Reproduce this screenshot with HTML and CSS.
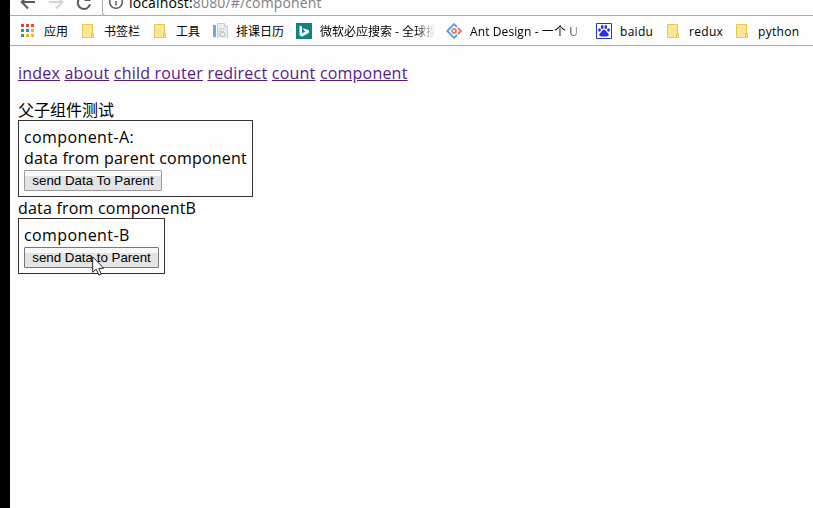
FILE: index.html
```html
<!DOCTYPE html>
<html lang="zh-CN">
<head>
<meta charset="utf-8">
<title>component</title>
<link rel="stylesheet" href="styles.css">
</head>
<body>
<div class="browser">
  <header class="toolbar">
    <svg class="nav" width="92" height="16" viewBox="0 0 92 16" fill="none" stroke-width="2">
      <path d="M25 2H12M18-4.500L11.700 2l6.300 6.500" stroke="#5a5a5a"/>
      <path d="M39 2h13M46-4.500L52.300 2L46 8.500" stroke="#d5d5d5"/>
      <path d="M80 4.300A6.200 6.200 0 1 1 78-2" stroke="#5a5a5a"/>
      <path d="M74 1h6.500v-6z" fill="#5a5a5a"/>
    </svg>
    <div class="address">
      <svg class="info" width="16" height="16" viewBox="0 0 16 16" fill="none" stroke="#5a5a5a" stroke-width="1.500"><circle cx="8" cy="8" r="6.300"/><path d="M8 7v4.500M8 4v1.500"/></svg>
      <div class="url">localhost:<span>8080/#/component</span></div>
    </div>
  </header>
  <nav class="bookmarks">
    <div class="mark w62"><svg width="16" height="16"><path d="M1 1h3v3H1zM6 1h3v3H6zM11 1h3v3h-3z" fill="#f33b32"/><path d="M1 6h3v3H1zM1 11h3v3H1z" fill="#2da05a"/><path d="M6 6h3v3H6z" fill="#2684f0"/><path d="M11 6h3v3h-3zM6 11h3v3H6zM11 11h3v3h-3z" fill="#f7b20c"/></svg><span>应用</span></div>
    <div class="mark w72"><svg width="14" height="16"><path d="M.5 1.500h10v9h1v4H.5z" fill="#ffe694" stroke="#e8c750"/><path d="M9.500 10.500h2v4h-2z" fill="#ffe694" stroke="#e8c750"/></svg><span>书签栏</span></div>
    <div class="mark w58"><svg width="14" height="16"><path d="M.5 1.500h10v9h1v4H.5z" fill="#ffe694" stroke="#e8c750"/><path d="M9.500 10.500h2v4h-2z" fill="#ffe694" stroke="#e8c750"/></svg><span>工具</span></div>
    <div class="mark w84"><svg width="16" height="16"><path d="M1 2h3v12H1z" fill="#70a7d8"/><path d="M5 1h8l3 3v11H5z" fill="#e8edf2"/><path d="M5.500 15V.5h7v3h3V15M7 6h6M7 8.500h5" stroke="#c5cbd2" fill="none"/><path d="M8 10h5v3H8z" stroke="#aab7c5" fill="#fff"/></svg><span>排课日历</span></div>
    <div class="mark w150"><svg width="16" height="16"><path d="M0 0h16v16H0z" fill="#0c8484"/><path d="M3.500 2.500L6 3.400v6.800L9.700 8.500 8 7.700 7 5.300l6 2v2.500l-7 4-2.500-1.500z" fill="#fff"/></svg><span class="bing">微软必应搜索 - 全球搜</span></div>
    <div class="mark w150"><svg width="16" height="16" fill="none" stroke-width="1.800"><path d="M11 4L8 1.200 1.200 8 8 14.800 11 12" stroke="#45a3ed"/><path d="M12 5l3 3-3 3" stroke="#f06868"/><circle cx="8" cy="8" r="2" stroke="#f17676"/></svg><span class="ant">Ant Design - 一个 U</span></div>
    <div class="mark w71"><svg width="16" height="16"><path d="M.5.5h15v15H.5z" fill="#fff" stroke="#2932e1"/><g fill="#2932e1"><ellipse cx="3.500" cy="7" rx="1.400" ry="1.800"/><ellipse cx="6.200" cy="4" rx="1.400" ry="2"/><ellipse cx="9.800" cy="4" rx="1.400" ry="2"/><ellipse cx="12.500" cy="7" rx="1.400" ry="1.800"/><path d="M8 6.700c2 0 2 2 4 3.500 2 2 0 4-4 3.200-4 .8-6-1.200-4-3.200 2-1.500 2-3.500 4-3.500z"/></g></svg><span class="latin">baidu</span></div>
    <div class="mark w69"><svg width="14" height="16"><path d="M.5 1.500h10v9h1v4H.5z" fill="#ffe694" stroke="#e8c750"/><path d="M9.500 10.500h2v4h-2z" fill="#ffe694" stroke="#e8c750"/></svg><span class="latin">redux</span></div>
    <div class="mark"><svg width="14" height="16"><path d="M.5 1.500h10v9h1v4H.5z" fill="#ffe694" stroke="#e8c750"/><path d="M9.500 10.500h2v4h-2z" fill="#ffe694" stroke="#e8c750"/></svg><span class="latin">python</span></div>
  </nav>
  <main>
    <div class="links"><a href="#/">index</a><a href="#/about">about</a><a href="#/child">child router</a><a href="#/redirect">redirect</a><a href="#/count">count</a><a href="#/component">component</a></div>
    <div class="title">父子组件测试</div>
    <section class="box box-a">
      <div class="line name">component-A:</div>
      <div class="line">data from parent component</div>
      <button class="btn-a">send Data To Parent</button>
    </section>
    <div class="line between">data from componentB</div>
    <section class="box box-b">
      <div class="line name">component-B</div>
      <button class="btn-b">send Data to Parent</button>
      <svg class="cursor" width="13" height="20" viewBox="0 0 13 20"><path d="M.7.8v15.500l3.500-3.200 2.700 6 2.400-1-2.600-5.800h5z" fill="#fff" stroke="#222" stroke-width="1"/></svg>
    </section>
  </main>
</div>
</body>
</html>
```
FILE: styles.css
```css
* { box-sizing: border-box; }
body { margin: 0; background: #fdfdfd; color: #000; font: 16px/21px "Open Sans", "Noto Sans CJK SC", sans-serif; overflow: hidden; }
.browser { height: 508px; border-left: 10px solid #000; }
.toolbar { display: flex; height: 16px; overflow: hidden; border-bottom: 1px solid #aaa; }
.nav { flex: none; }
.address { flex: 1; display: flex; height: 36px; margin-top: -20px; border: 1px solid #aaa; border-right: 0; border-radius: 4px 0 0 4px; }
.info { margin: 13px 5px 0; }
.url { margin-top: 11px; white-space: nowrap; font-size: 14px; letter-spacing: .15px; }
.url span { color: #808080; }
.bookmarks { display: flex; height: 30px; padding: 7px 0 0 10px; border-bottom: 1px solid #aaa; font-size: 12px; line-height: 17px; white-space: nowrap; }
.mark { display: flex; flex: none; gap: 8px; }
.mark svg { flex: none; }
.w62 { width: 62px; }
.w72 { width: 72px; }
.w58 { width: 58px; }
.w84 { width: 84px; }
.w150 { width: 150px; }
.w71 { width: 71px; }
.w69 { width: 69px; }
.bing, .ant { width: 115px; overflow: hidden; -webkit-mask-image: linear-gradient(90deg, #000 95px, transparent 115px); mask-image: linear-gradient(90deg, #000 95px, transparent 115px); }
.ant { letter-spacing: .1px; }
.latin { letter-spacing: .3px; }
main { padding: 17px 8px 0; }
.links { display: flex; gap: 4.5px; margin-bottom: 16px; letter-spacing: .2px; }
.links a { color: #551a8b; text-underline-offset: 1px; }
.title { height: 20px; }
.line { height: 21px; white-space: nowrap; letter-spacing: .2px; }
.name { letter-spacing: .4px; }
.between { padding-top: 1px; }
.box { position: relative; border: 1px solid #333; padding: 6px 5px 5px; }
.box-a { width: 235px; height: 77px; }
.box-b { width: 147px; height: 56px; }
button { display: block; height: 21px; padding: 0; border: 1px solid #999; border-radius: 1px; background: linear-gradient(#f8f8f8 0 25%, #e2e2e2 26%, #e5e5e5); color: #000; font: 13.333px/18px "Liberation Sans", sans-serif; white-space: nowrap; }
.btn-a { width: 138px; margin-top: 1px; }
.btn-b { width: 135px; margin-top: 1px; border-color: #777; }
.cursor { position: absolute; left: 73px; top: 37px; }
```
